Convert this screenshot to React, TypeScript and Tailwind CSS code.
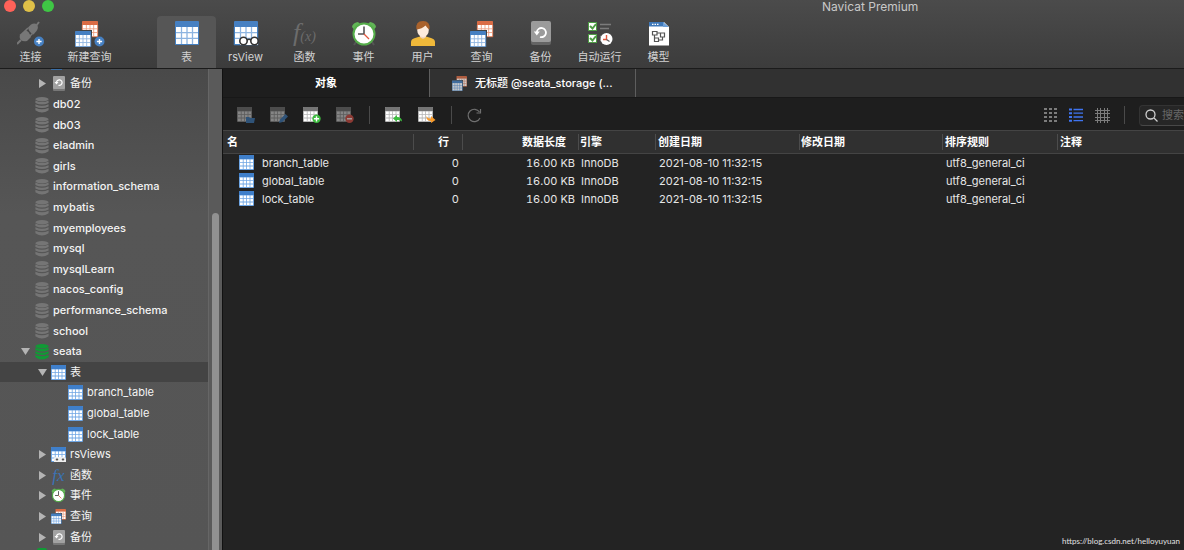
import { useState } from 'react';
import type { ReactNode } from 'react';
import clsx from 'clsx';

type IconProps = { className?: string };

const Grid = ({ x = 0, y = 0, s = 24, head = '#4680c2', line = '#8db4e0', body = '#fff' }) => {
    const k = s / 24;
    return (
        <g transform={`translate(${x} ${y}) scale(${k})`}>
            <rect width="24" height="24" rx="1" fill={head} />
            <rect x="1" y="6" width="22" height="17" fill={body} />
            <path d="M1 11.7h22M1 17.3h22M6.5 6v17M12 6v17M17.5 6v17" stroke={line} strokeWidth="1.3" />
            <path d="M0 6v18h24V6" fill="none" stroke={head} strokeOpacity="0.5" />
        </g>
    );
};

const SmallGrid = ({ x = 0, y = 0, head = '#3f7fca', line = '#6fa6e4', body = '#fff' }) => (
    <g transform={`translate(${x} ${y})`}>
        <rect width="15" height="15" rx="1" fill={line} />
        <path d="M0 4V1q0-1 1-1h13q1 0 1 1v3z" fill={head} />
        <path
            d="M1 4.6h2.8v2.6H1zM4.6 4.6h2.6v2.6H4.6zM8 4.6h2.6v2.6H8zM11.4 4.6H14v2.6h-2.6zM1 8h2.8v2.6H1zM4.6 8h2.6v2.6H4.6zM8 8h2.6v2.6H8zM11.4 8H14v2.6h-2.6zM1 11.4h2.8V14H1zM4.6 11.4h2.6V14H4.6zM8 11.4h2.6V14H8zM11.4 11.4H14V14h-2.6z"
            fill={body}
        />
    </g>
);

const PlusBadge = ({ cx, cy, r = 5, fill = '#4680c2' }: { cx: number; cy: number; r?: number; fill?: string }) => (
    <g>
        <circle cx={cx} cy={cy} r={r} fill={fill} />
        <path d={`M${cx - 2.6} ${cy}h5.2M${cx} ${cy - 2.6}v5.2`} stroke="#fff" strokeWidth="1.4" />
    </g>
);

const ConnectIcon = () => (
    <svg width="28" height="26" viewBox="0 0 28 26">
        <g fill="#777" stroke="#777">
            <path d="M0 23l4-4M19 5l3-4" strokeWidth="2" fill="none" />
            <path d="M3 13.5l5-4.5q4 1 6 7l-4 4q-4 1-6-1-2-2-1-5.500z" stroke="none" />
            <path d="M11 6.500l3-3q4-2 6 .500t-.500 6l-3 3.500q-4.500-2-5.500-7z" stroke="none" />
            <path d="M8 10l3-3M12.500 15.500l3-3" strokeWidth="1.500" fill="none" />
        </g>
        <PlusBadge cx={22} cy={20.5} />
    </svg>
);

const NewQueryIcon = () => (
    <svg width="30" height="26" viewBox="0 0 30 26">
        <Grid x={7} s={16} head="#da6c45" line="#ee9c7e" />
        <rect y="9" width="17" height="17" fill="#434343" />
        <Grid y={10} s={16} />
        <PlusBadge cx={24.5} cy={20.5} />
    </svg>
);

const QueryIcon = () => (
    <svg width="24" height="26" viewBox="0 0 24 26">
        <Grid x={7} s={16} head="#da6c45" line="#ee9c7e" />
        <rect y="9" width="17" height="17" fill="#434343" />
        <Grid y={10} s={16} />
    </svg>
);

const TableIcon = () => (
    <svg width="24" height="24" viewBox="0 0 24 24">
        <Grid />
    </svg>
);

const ViewIcon = () => (
    <svg width="26" height="26" viewBox="0 0 26 26">
        <Grid x={1} />
        <path d="M7 18h18v6H7z" fill="#fff" />
        <g fill="#fff" stroke="#333" strokeWidth="1.6">
            <circle cx="10.5" cy="20" r="3.7" />
            <circle cx="21.5" cy="20" r="3.7" />
            <path d="M14 19q2-1.500 4 0" fill="none" />
        </g>
    </svg>
);

const FunctionIcon = () => (
    <span className="flex h-[26px] items-baseline font-[Liberation_Serif,serif] leading-[24px] text-[#6c6c6c] italic">
        <span className="text-[26px]">f</span>
        <span className="text-[14px]">(x)</span>
    </span>
);

const ClockIcon = ({ className = 'size-[26px]' }: IconProps) => (
    <svg className={className} viewBox="0 0 26 26">
        <path d="M5 21l-2 3M21 21l2 3" stroke="#555" strokeWidth="2" />
        <path d="M1 6q0-2 2-3.500T7 1l2 2-6 5.500zM25 6q0-2-2-3.500T19 1l-2 2 6 5.500z" fill="#62b557" />
        <circle cx="13" cy="13" r="10.5" fill="#fff" stroke="#55ad4a" strokeWidth="2" />
        <path d="M13 5.500V13H7" fill="none" stroke="#555" strokeWidth="1.6" />
        <path d="M13 13l5 5" stroke="#e0583f" strokeWidth="1.3" />
    </svg>
);

const UserIcon = () => (
    <svg width="24" height="26" viewBox="0 0 24 26">
        <path d="M0 25v-4q0-3 4-4l5-1.500h6l5 1.500q4 1 4 4v4z" fill="#f0b93a" />
        <path d="M9 12h6v4q-3 3.500-6 0z" fill="#f1d4c0" />
        <ellipse cx="12" cy="9" rx="5.8" ry="7" fill="#fdebdc" />
        <path d="M5.500 8.500Q4 0 12 0q7.500 0 6.500 8.500Q16 7 14.500 4.500 11 8 5.500 8.500z" fill="#a9622c" />
    </svg>
);

const BackupIcon = () => (
    <svg width="20" height="24" viewBox="0 0 20 24">
        <rect y="2" width="20" height="22" rx="2" fill="#646464" />
        <rect width="20" height="21" rx="2" fill="#9b9b9b" />
        <path d="M5.800 11A4.600 4.600 0 1 1 9 16" fill="none" stroke="#fff" strokeWidth="1.8" />
        <path d="M2.800 10.500h6l-3 4z" fill="#fff" />
    </svg>
);

const SmallBackupIcon = () => (
    <svg width="14" height="15" viewBox="0 0 14 15">
        <rect x="1" y="1" width="12" height="14" rx="1" fill="#777" />
        <rect x="1" width="12" height="13" rx="1" fill="#a2a2a2" />
        <path d="M4.500 6.500A2.800 2.800 0 1 1 6.500 9.300" fill="none" stroke="#fff" strokeWidth="1.2" />
        <path d="M2.500 6h4l-2 2.600z" fill="#fff" />
    </svg>
);

const AutomationIcon = () => (
    <svg width="26" height="26" viewBox="0 0 26 26">
        <g fill="#fff" stroke="#4f9d45">
            <rect x="1.5" y="1.5" width="8" height="8" />
            <rect x="1.5" y="13.5" width="8" height="8" />
            <path d="M3 5l2.500 2.500L9 3M3 17l2.500 2.500L9 15" fill="none" strokeWidth="2" />
        </g>
        <path d="M13 3.500h11M13 7.500h9M13 15.500h2M13 19.500h2" stroke="#7b7b7b" strokeWidth="1.5" />
        <circle cx="19.5" cy="18" r="6" fill="#fff" />
        <path d="M19.500 14v4.500H16" fill="none" stroke="#e0583f" strokeWidth="1.4" />
        <path d="M19.500 18.500l3 2" stroke="#555" strokeWidth="1.2" />
    </svg>
);

const ModelIcon = () => (
    <svg width="20" height="26" viewBox="0 0 20 26">
        <path d="M0 1h15l5 5v18.500H0z" fill="#fff" />
        <path d="M0 1h15v4.500H0z" fill="#3f78b8" />
        <path d="M14 1l6 5h-6z" fill="#6ea0d8" />
        <path d="M3 3.300h1.500M5.500 3.300H7M8 3.300h1.500" stroke="#fff" strokeWidth="1.3" />
        <g fill="none" stroke="#555" strokeWidth="1.2">
            <path d="M3.500 10.500h4.500v3.500H3.500zM11.500 12h4v4h-4zM5.500 17h4v3.500h-4zM8 12h3.500M9.500 19h4v-3M5.500 14v3" />
        </g>
    </svg>
);

const SmallTable = () => (
    <svg width="15" height="15" viewBox="0 0 15 15">
        <SmallGrid />
    </svg>
);

const SmallView = () => (
    <svg width="15" height="15" viewBox="0 0 15 15">
        <SmallGrid />
        <path d="M3 12q-1-2 2-2h8q2 0 2 2v3H3z" fill="#eee" />
        <circle cx="6" cy="12.5" r="1.7" fill="#555" stroke="#fff" />
        <circle cx="12" cy="12.5" r="1.7" fill="#555" stroke="#fff" />
    </svg>
);

const SmallQuery = ({ className }: IconProps) => (
    <svg className={className} width="15" height="15" viewBox="0 0 30 30">
        <Grid x={9} s={21} head="#da6c45" line="#e68a68" />
        <rect y="8" width="22" height="22" fill="#4a4a4a" />
        <Grid y={9} s={21} line="#5f9ae0" />
    </svg>
);

const SmallFunction = () => (
    <span className="font-[Liberation_Serif,serif] text-[17px] leading-[15px] text-[#3b73b5] italic">fx</span>
);

const DatabaseIcon = ({ active }: { active?: boolean }) => (
    <svg width="14" height="16" viewBox="0 0 14 16">
        <g fill={active ? '#109a35' : '#757575'}>
            <ellipse cx="7" cy="2.2" rx="6.6" ry="2.2" />
            <path d="M.4 3.600q6.600 3 13.200 0v2.300q-6.600 3.200-13.200 0z" />
            <path d="M.4 7.200q6.600 3 13.200 0v2.300q-6.600 3.200-13.200 0z" />
            <path d="M.4 10.800q6.600 3 13.200 0v2.400q-6.600 4.500-13.200 0z" />
        </g>
    </svg>
);

const PlainBase = ({ dim, children }: { dim?: boolean; children: ReactNode }) => (
    <svg width="18" height="16" viewBox="0 0 18 16">
        <SmallGrid head={dim ? '#4c4c4c' : '#757575'} line={dim ? '#5d5d5d' : '#b5b5b5'} body={dim ? '#858585' : '#fff'} />
        {children}
    </svg>
);

const toolbar = [
    { label: '表', icon: <TableIcon /> },
    { label: 'rsView', icon: <ViewIcon /> },
    { label: '函数', icon: <FunctionIcon /> },
    { label: '事件', icon: <ClockIcon /> },
    { label: '用户', icon: <UserIcon /> },
    { label: '查询', icon: <QueryIcon /> },
    { label: '备份', icon: <BackupIcon /> },
    { label: '自动运行', icon: <AutomationIcon /> },
    { label: '模型', icon: <ModelIcon /> },
];

const objectActions = [
    {
        label: '打开表',
        icon: (
            <PlainBase dim>
                <path d="M9 10h3l1 1h5l-1 5H9z" fill="#2f5378" />
            </PlainBase>
        ),
    },
    {
        label: '设计表',
        icon: (
            <PlainBase dim>
                <path d="M9 16l1-3.500L15.500 7l2.500 2.500-5.500 5.500z" fill="#2f5378" />
            </PlainBase>
        ),
    },
    {
        label: '新建表',
        icon: (
            <PlainBase>
                <PlusBadge cx={13.5} cy={11.8} r={4.2} fill="#3dbb3f" />
            </PlainBase>
        ),
    },
    {
        label: '删除表',
        icon: (
            <PlainBase dim>
                <circle cx="13.5" cy="11.8" r="4.2" fill="#8c3a34" />
                <path d="M11 11.800h5" stroke="#aaa" strokeWidth="1.3" />
            </PlainBase>
        ),
    },
];

const transferActions = [
    {
        label: '导入向导',
        icon: (
            <PlainBase>
                <path d="M8 11.500L12 8v2q5 0 5 4.500-2-2-5-1.500v2z" fill="#3dbb3f" />
            </PlainBase>
        ),
    },
    {
        label: '导出向导',
        icon: (
            <PlainBase>
                <path d="M8.500 9q1 3 4.500 2.500V9l4.500 4-4.500 3v-2q-5 0-4.500-5z" fill="#f79a2a" />
            </PlainBase>
        ),
    },
];

type Node = { id: string; label: string; depth: 1 | 2 | 3; icon: ReactNode; arrow?: 'open' | 'closed' };

const db = (label: string): Node => ({ id: label, label, depth: 1, icon: <DatabaseIcon /> });

const tree: Node[] = [
    { id: 'db-backup', label: '备份', depth: 2, icon: <SmallBackupIcon />, arrow: 'closed' },
    db('db02'),
    db('db03'),
    db('eladmin'),
    db('girls'),
    db('information_schema'),
    db('mybatis'),
    db('myemployees'),
    db('mysql'),
    db('mysqlLearn'),
    db('nacos_config'),
    db('performance_schema'),
    db('school'),
    { id: 'seata', label: 'seata', depth: 1, icon: <DatabaseIcon active />, arrow: 'open' },
    { id: 'tables', label: '表', depth: 2, icon: <SmallTable />, arrow: 'open' },
    { id: 'branch', label: 'branch_table', depth: 3, icon: <SmallTable /> },
    { id: 'global', label: 'global_table', depth: 3, icon: <SmallTable /> },
    { id: 'lock', label: 'lock_table', depth: 3, icon: <SmallTable /> },
    { id: 'views', label: 'rsViews', depth: 2, icon: <SmallView />, arrow: 'closed' },
    { id: 'functions', label: '函数', depth: 2, icon: <SmallFunction />, arrow: 'closed' },
    { id: 'events', label: '事件', depth: 2, icon: <ClockIcon className="size-[15px]" />, arrow: 'closed' },
    { id: 'queries', label: '查询', depth: 2, icon: <SmallQuery />, arrow: 'closed' },
    { id: 'backups', label: '备份', depth: 2, icon: <SmallBackupIcon />, arrow: 'closed' },
];

const depthPadding = { 1: 'pl-[17px]', 2: 'pl-[34px]', 3: 'pl-[51px]' };

const columns = [
    { label: '名', col: 'w-[191px]', cell: 'border-r pl-1' },
    { label: '行', col: 'w-[49px]', cell: 'border-r pr-[13px] text-right' },
    { label: '数据长度', col: 'w-[116px]', cell: 'border-r pr-3 text-right' },
    { label: '引擎', col: 'w-[77px]', cell: 'border-r pl-px' },
    { label: '创建日期', col: 'w-[144px]', cell: 'border-r pl-0.5' },
    { label: '修改日期', col: 'w-[143px]', cell: 'border-r pl-px' },
    { label: '排序规则', col: 'w-[115px]', cell: 'border-r pl-0.5' },
    { label: '注释', col: '', cell: 'pl-0.5' },
];

const tables = [
    { name: 'branch_table', rows: 0, size: '16.00 KB', engine: 'InnoDB', created: '2021-08-10 11:32:15', collation: 'utf8_general_ci' },
    { name: 'global_table', rows: 0, size: '16.00 KB', engine: 'InnoDB', created: '2021-08-10 11:32:15', collation: 'utf8_general_ci' },
    { name: 'lock_table', rows: 0, size: '16.00 KB', engine: 'InnoDB', created: '2021-08-10 11:32:15', collation: 'utf8_general_ci' },
];

const ToolbarButton = ({ label, icon, active, onClick }: { label: string; icon: ReactNode; active?: boolean; onClick?: () => void }) => (
    <button
        type="button"
        onClick={onClick}
        className={clsx(
            'flex w-[59px] shrink-0 flex-col items-center rounded-t pt-[5px] text-[11px] leading-4 whitespace-nowrap text-[#d2d2d2]',
            active && 'bg-[#565656]',
        )}
    >
        <span className="flex h-7 items-start justify-center">{icon}</span>
        {label}
    </button>
);

const Separator = () => <div className="h-[18px] w-px shrink-0 bg-[#4a4a4a]" />;

const Header = () => {
    const [active, setActive] = useState('表');

    return (
        <header className="border-b border-[#1b1b1b] bg-linear-to-b from-[#4b4b4b] to-[#3c3c3c]">
            <div className="flex h-4 items-start pl-1">
                <div className="flex gap-[7px]">
                    <button type="button" aria-label="关闭" className="size-3 rounded-full bg-[#ff6259]" />
                    <button type="button" aria-label="最小化" className="size-3 rounded-full bg-[#dfc048]" />
                    <button type="button" aria-label="最大化" className="size-3 rounded-full bg-[#3fc645]" />
                </div>
                <h1 className="flex-1 pl-[768px] text-[12px] leading-[14px] whitespace-nowrap text-[#c8c8c8]">Navicat Premium</h1>
            </div>
            <div className="flex h-[52px] pl-px">
                <ToolbarButton label="连接" icon={<ConnectIcon />} />
                <ToolbarButton label="新建查询" icon={<NewQueryIcon />} />
                <nav className="ml-[38px] flex">
                    {toolbar.map((item) => (
                        <ToolbarButton
                            key={item.label}
                            label={item.label}
                            icon={item.icon}
                            active={active === item.label}
                            onClick={() => setActive(item.label)}
                        />
                    ))}
                </nav>
            </div>
        </header>
    );
};

const Sidebar = () => {
    const [selected, setSelected] = useState('tables');

    return (
        <aside className="flex w-[223px] shrink-0 border-r border-[#111] bg-linear-to-b from-[#494949] via-[#565656] via-30% to-[#555]">
            <div className="min-w-0 flex-1 overflow-hidden">
                {/* row scrolled out at the top */}
                <div className="h-1 pl-[51px]">
                    <div className="h-px w-[11px] bg-[#3b6ea5]" />
                </div>
                <ul>
                    {tree.map((node) => (
                        <li key={node.id} className="h-[21px] nth-[5n]:h-5 nth-[5n+3]:h-5">
                            <button
                                type="button"
                                onClick={() => setSelected(node.id)}
                                className={clsx(
                                    'flex h-full w-full items-center text-left text-[11px] whitespace-nowrap text-[#f4f4f4]',
                                    depthPadding[node.depth],
                                    node.depth === 1 && 'font-medium',
                                    selected === node.id && 'bg-[#444]',
                                )}
                            >
                                <span className="flex w-[17px] shrink-0 pl-1">
                                    {node.arrow && (
                                        <svg width="9" height="9" viewBox="0 0 9 9" fill="#b4b4b4">
                                            <path d={node.arrow === 'open' ? 'M0 1h9L4.500 8z' : 'M1 0l7 4.500L1 9z'} />
                                        </svg>
                                    )}
                                </span>
                                <span className="mr-1 flex w-[15px] shrink-0 justify-center">{node.icon}</span>
                                {node.label}
                            </button>
                        </li>
                    ))}
                </ul>
                <div className="h-[3px] pt-px pl-[37px]">
                    <div className="h-0.5 w-2.5 rounded-t bg-[#109a35]" />
                </div>
            </div>
            <div className="flex w-3.5 flex-col items-center border-l border-[#666] bg-[#5a5a5a] pt-36">
                <div className="w-[7px] flex-1 rounded-t-full bg-[#919191]" />
            </div>
        </aside>
    );
};

const ObjectToolbar = () => {
    const [search, setSearch] = useState('');

    return (
        <div className="flex h-[33px] items-center border-t border-[#181818] bg-[#1e1e1e] pt-0.5 pl-3.5">
            <div className="flex items-center gap-[15px]">
                {objectActions.map((action) => (
                    <button key={action.label} type="button" aria-label={action.label}>
                        {action.icon}
                    </button>
                ))}
                <Separator />
                {transferActions.map((action) => (
                    <button key={action.label} type="button" aria-label={action.label}>
                        {action.icon}
                    </button>
                ))}
                <Separator />
                <button type="button" aria-label="刷新">
                    <svg width="15" height="15" viewBox="0 0 15 15" fill="none" stroke="#707070" strokeWidth="1.2">
                        <path d="M13 10A6.200 6.200 0 1 1 12.500 4" />
                        <path d="M13.500 1v4h-4" />
                    </svg>
                </button>
            </div>
            <div className="ml-auto flex items-center">
                <button type="button" aria-label="图标视图" className="mr-3">
                    <svg width="14" height="14" viewBox="0 0 14 14" stroke="#7c7c7c" strokeWidth="2" strokeDasharray="3 2">
                        <path d="M1 1h13M1 5h13M1 9h13M1 13h13" />
                    </svg>
                </button>
                <button type="button" aria-label="列表视图" className="mr-3">
                    <svg width="14" height="14" viewBox="0 0 14 14" stroke="#3f74f0">
                        <path d="M0 1.500h3M0 5.200h3M0 9h3M0 12.700h3" strokeWidth="2" />
                        <path d="M4.500 1.500H14M4.500 5.200H14M4.500 9H14M4.500 12.700H14" strokeWidth="1.3" />
                    </svg>
                </button>
                <button type="button" aria-label="详细信息" className="mr-3.5">
                    <svg width="15" height="15" viewBox="0 0 15 15" stroke="#7c7c7c">
                        <path d="M0 2.500h15M0 5.500h15M0 9.500h15M0 12.500h15M2.500 0v15M5.500 0v15M9.500 0v15M12.500 0v15" />
                    </svg>
                </button>
                <Separator />
                <label className="ml-3.5 flex h-[21px] items-center gap-1 rounded-l border border-r-0 border-[#333] border-b-[#484848] bg-[#262626] pl-[5px]">
                    <svg width="13" height="13" viewBox="0 0 13 13" fill="none" stroke="#d0d0d0" strokeWidth="1.3">
                        <circle cx="5.5" cy="5.5" r="4.5" />
                        <path d="M9 9l3.500 3.500" />
                    </svg>
                    <input
                        type="text"
                        aria-label="搜索"
                        placeholder="搜索"
                        value={search}
                        onChange={(e) => setSearch(e.target.value)}
                        className="w-[22px] bg-transparent text-[11px] text-white outline-none placeholder:text-[#666]"
                    />
                </label>
            </div>
        </div>
    );
};

const ObjectTable = () => (
    <table className="w-full table-fixed border-collapse text-[11px] whitespace-nowrap text-[#e6e6e6]">
        <colgroup>
            {columns.map((column) => (
                <col key={column.label} className={column.col} />
            ))}
        </colgroup>
        <thead>
            <tr className="h-[23px] border-t border-b border-[#444] bg-[#303030]">
                {columns.map((column) => (
                    <th key={column.label} scope="col" className="p-0 text-left font-bold text-white">
                        <div className={clsx('h-4 border-[#4c4c4c] leading-4', column.cell)}>{column.label}</div>
                    </th>
                ))}
            </tr>
        </thead>
        <tbody>
            {tables.map((table) => (
                <tr key={table.name} className="h-[18px] leading-4">
                    <td className="p-0 pl-4">
                        <div className="flex items-center gap-2">
                            <SmallTable />
                            {table.name}
                        </div>
                    </td>
                    <td className="p-0 pr-1 text-right tabular-nums">{table.rows}</td>
                    <td className="p-0 pr-1 text-right tabular-nums">{table.size}</td>
                    <td className="p-0 pl-0.5">{table.engine}</td>
                    <td className="p-0 pl-[3px]">{table.created}</td>
                    <td className="p-0" />
                    <td className="p-0 pl-[3px]">{table.collation}</td>
                    <td className="p-0" />
                </tr>
            ))}
        </tbody>
    </table>
);

const App = () => {
    return (
        <div className="relative flex min-h-screen flex-col overflow-hidden bg-[#232323] font-[Inter,'Noto_Sans_CJK_SC',sans-serif]">
            <Header />
            <div className="flex flex-1">
                <Sidebar />
                <main className="min-w-0 flex-1">
                    <div className="flex h-7 bg-[#313131] text-[11px] text-white">
                        <button type="button" className="w-[206px] bg-[#1e1e1e] font-semibold">
                            对象
                        </button>
                        <button type="button" className="flex w-[207px] items-center gap-2 border-x border-[#5e5e5e] pl-[22px] font-medium">
                            <SmallQuery className="opacity-75" />
                            无标题 @seata_storage (...
                        </button>
                    </div>
                    <ObjectToolbar />
                    <ObjectTable />
                </main>
            </div>
            <p className="absolute right-1 bottom-1 font-[Lato,sans-serif] text-[8px] leading-[10px] text-[#e2e2e2]">
                https://blog.csdn.net/helloyuyuan
            </p>
        </div>
    );
};

export default App;
